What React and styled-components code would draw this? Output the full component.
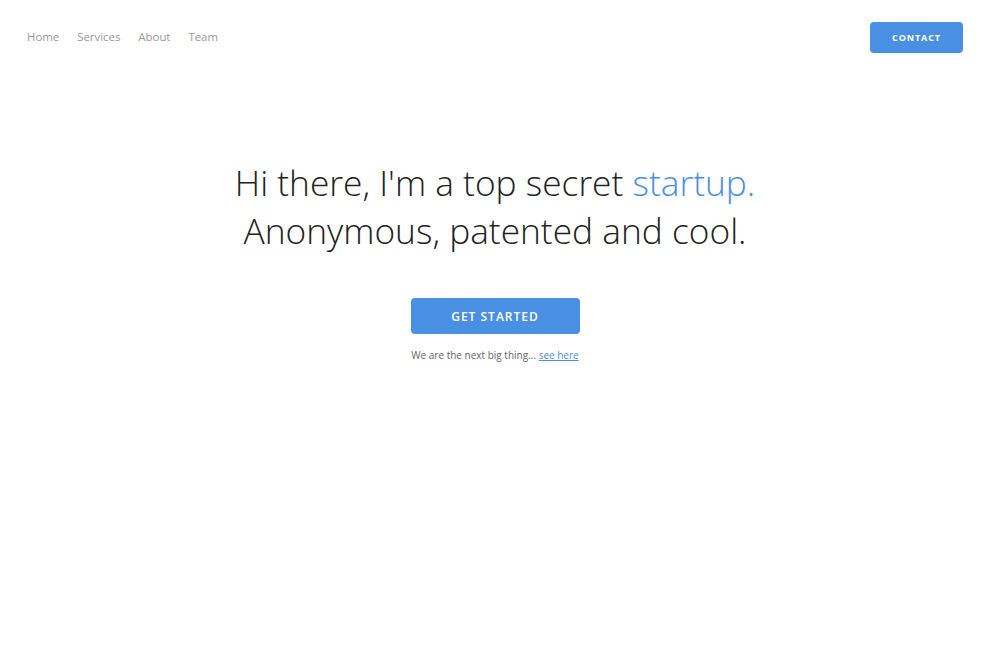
import React from "react";
import styled, { createGlobalStyle } from "styled-components";

const Global = createGlobalStyle`
  html, body { margin: 0; padding: 0; background: #fff; }
  body { font-family: "Open Sans", "Liberation Sans", sans-serif; }
`;

const Page = styled.div`
  width: 990px;
  min-height: 650px;
  display: flex;
  flex-direction: column;
`;

const Header = styled.header`
  display: flex;
  align-items: center;
  justify-content: space-between;
  padding: 22px 27px 0 27px;
  height: 30px;
`;

const Nav = styled.nav`
  display: flex;
  gap: 18px;
`;

const NavLink = styled.a`
  font-size: 11.4px;
  color: #999;
  text-decoration: none;
  line-height: 30px;
`;

const Button = styled.button`
  font-family: "Open Sans", "Liberation Sans", sans-serif;
  background: #4a90e2;
  color: #fff;
  border: none;
  border-radius: 4px;
  cursor: pointer;
  text-transform: uppercase;
  font-weight: ${(p) => (p.$big ? 600 : 700)};
  font-size: ${(p) => (p.$big ? "12px" : "9px")};
  letter-spacing: ${(p) => (p.$big ? "1px" : "0.9px")};
  width: ${(p) => (p.$big ? "169px" : "93px")};
  height: ${(p) => (p.$big ? "36px" : "31px")};
  padding: 0;
`;

const Hero = styled.section`
  display: flex;
  flex-direction: column;
  align-items: center;
  padding-top: 106px;
`;

const Title = styled.h1`
  margin: 0;
  font-weight: 300;
  font-size: 35.3px;
  line-height: 48px;
  color: #222;
  text-align: center;
`;

const Accent = styled.span`
  color: #4a90e2;
`;

const Spacer = styled.div`
  height: ${(p) => p.$h}px;
`;

const Sub = styled.p`
  margin: 14px 0 0;
  font-size: 10px;
  line-height: 14px;
  color: #666;
`;

const SubLink = styled.a`
  color: #4a90e2;
  text-decoration: underline;
`;

export default function App() {
  return (
    <Page>
      <Global />
      <Header>
        <Nav>
          <NavLink href="#">Home</NavLink>
          <NavLink href="#">Services</NavLink>
          <NavLink href="#">About</NavLink>
          <NavLink href="#">Team</NavLink>
        </Nav>
        <Button>Contact</Button>
      </Header>
      <Hero>
        <Title>
          Hi there, I'm a top secret <Accent>startup.</Accent>
          <br />
          Anonymous, patented and cool.
        </Title>
        <Spacer $h={44} />
        <Button $big>Get Started</Button>
        <Sub>
          We are the next big thing... <SubLink href="#">see here</SubLink>
        </Sub>
      </Hero>
    </Page>
  );
}
